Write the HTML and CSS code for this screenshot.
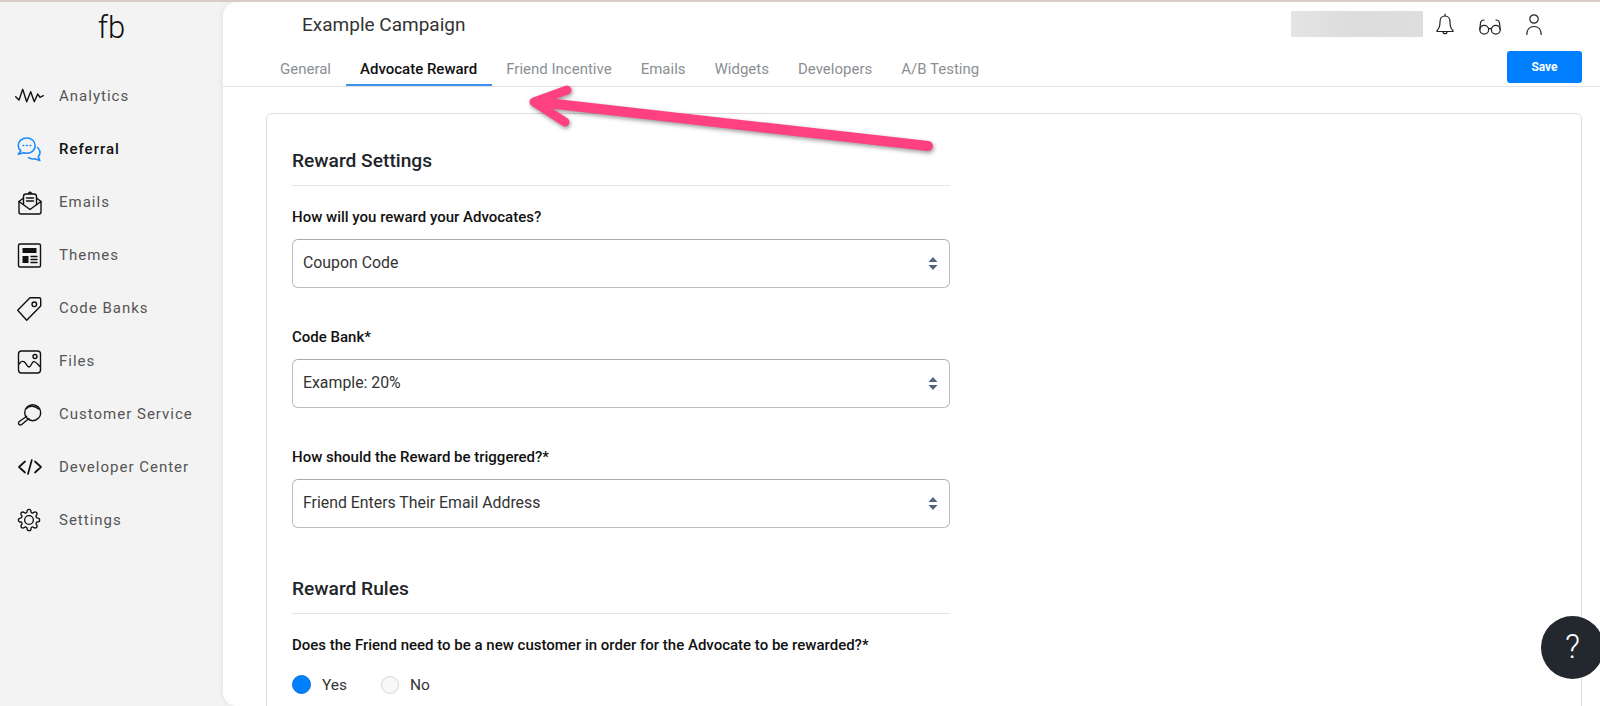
FILE: index.html
```html
<!DOCTYPE html>
<html lang="en">
<head>
    <meta charset="UTF-8">
    <meta name="viewport" content="width=device-width, initial-scale=1.0">
    <title>Example Campaign</title>
    <link rel="stylesheet" href="styles.css">
</head>
<body>
    <aside class="sidebar">
        <div class="logo">fb</div>
        <nav class="side-nav">
            <a class="side-item">
                <svg class="side-icon" viewBox="0 0 30 30"><path d="M1.700 15.700 5 19 8.700 8.300 12.700 20.700 16.700 10.700 20.300 20.700 23.700 13 26 16.300 29.300 14.700"/></svg>
                <span>Analytics</span>
            </a>
            <a class="side-item active">
                <svg class="side-icon" viewBox="0 0 30 30"><path d="M12.800 4C8 4 4.200 7.200 4.200 11.400c0 2.300 1 4 2.600 5.300L4.300 20.300l5.200-1.500c1 .3 2.200.5 3.300.5 4.800 0 8.400-3.300 8.400-7.600S17.600 4 12.800 4z"/><path d="M23.500 13.500c3 2.400 3.500 6.300.7 9l1.600 4-4.800-1.800c-2.400.6-4.800.2-6.500-1"/><path class="dots" d="M9 11.500h.8M12.500 11.500h.8M16 11.500h.8"/></svg>
                <span>Referral</span>
            </a>
            <a class="side-item">
                <svg class="side-icon" viewBox="0 0 30 30"><path d="M5 14.500V25a2 2 0 0 0 2 2h18a2 2 0 0 0 2-2V14.500L16 22.500z"/><path d="M5 14.500 9.500 11M27 14.500 22.500 11"/><path d="M9.500 17.500V9.500A2.500 2.500 0 0 1 12 7h8a2.500 2.500 0 0 1 2.500 2.500v8M13.500 7 16 5l2.500 2M12.500 11h7M12.500 14h7"/></svg>
                <span>Emails</span>
            </a>
            <a class="side-item">
                <svg class="side-icon" viewBox="0 0 30 30"><rect x="4.500" y="4" width="22" height="23" rx="1.500"/><rect class="solid" x="8.500" y="8" width="14" height="5"/><rect class="solid" x="8.500" y="16" width="6" height="7"/><path d="M17 16.500h6M17 19.500h6M17 22.500h6"/></svg>
                <span>Themes</span>
            </a>
            <a class="side-item">
                <svg class="side-icon" viewBox="0 0 30 30"><path d="M26.700 6.200a1.500 1.500 0 0 0-1.500-1.500H16L3.700 17.300l9 10L26.700 13z"/><circle cx="20.300" cy="11.300" r="2.300"/></svg>
                <span>Code Banks</span>
            </a>
            <a class="side-item">
                <svg class="side-icon" viewBox="0 0 30 30"><rect x="4.500" y="5" width="22" height="22" rx="3"/><circle cx="21" cy="10.500" r="2"/><path d="M5 18c2-3 3.500-3 5-2.300 2 1 3 5 5 5.300 2 .2 2.500-4.500 4.500-5.300 2-.7 4.500 3 7 5.300"/></svg>
                <span>Files</span>
            </a>
            <a class="side-item">
                <svg class="side-icon" viewBox="0 0 30 30"><circle cx="18.700" cy="13.700" r="8"/><path d="M12.500 9.500c2-3 9-3 12 .5"/><path d="M12.800 17.200 5 22.800a1.900 1.900 0 0 0 2.400 2.900l7.500-6.200"/></svg>
                <span>Customer Service</span>
            </a>
            <a class="side-item">
                <svg class="side-icon code" viewBox="0 0 30 30"><path d="M11 9.500 5 15l6 5.500M17.800 8 14 22M21 9.500l6 5.500-6 5.500"/></svg>
                <span>Developer Center</span>
            </a>
            <a class="side-item">
                <svg class="side-icon" viewBox="-3.500 -3.500 31 31"><circle cx="12" cy="12" r="4.500"/><path d="M19.400 15a1.650 1.650 0 0 0 .33 1.820l.06.06a2 2 0 0 1 0 2.830 2 2 0 0 1-2.830 0l-.06-.06a1.650 1.650 0 0 0-1.820-.33 1.650 1.650 0 0 0-1 1.510V21a2 2 0 0 1-2 2 2 2 0 0 1-2-2v-.09A1.650 1.650 0 0 0 9 19.400a1.650 1.650 0 0 0-1.820.33l-.06.06a2 2 0 0 1-2.830 0 2 2 0 0 1 0-2.830l.06-.06a1.650 1.650 0 0 0 .33-1.820 1.650 1.650 0 0 0-1.510-1H3a2 2 0 0 1-2-2 2 2 0 0 1 2-2h.09A1.650 1.650 0 0 0 4.600 9a1.650 1.650 0 0 0-.33-1.820l-.06-.06a2 2 0 0 1 0-2.830 2 2 0 0 1 2.830 0l.06.06a1.650 1.650 0 0 0 1.820.33H9a1.650 1.650 0 0 0 1-1.510V3a2 2 0 0 1 2-2 2 2 0 0 1 2 2v.09a1.650 1.650 0 0 0 1 1.510 1.650 1.650 0 0 0 1.820-.33l.06-.06a2 2 0 0 1 2.830 0 2 2 0 0 1 0 2.830l-.06.06a1.650 1.650 0 0 0-.33 1.820V9a1.650 1.650 0 0 0 1.510 1H21a2 2 0 0 1 2 2 2 2 0 0 1-2 2h-.09a1.650 1.650 0 0 0-1.510 1z"/></svg>
                <span>Settings</span>
            </a>
        </nav>
    </aside>

    <main class="main">
        <header class="topbar">
            <div class="campaign-title">Example Campaign</div>
            <div class="top-tools">
                <div class="blurred-name"></div>
                <svg class="tool-icon bell" viewBox="0 0 18 22"><path d="M9 3C5.500 3 4 5.800 4 9c0 4-.7 6.500-3 8.500v1h16v-1c-2.300-2-3-4.500-3-8.500 0-3.200-1.500-6-5-6z"/><path d="M9 3V1M7 18.700a2 2 0 0 0 4 0"/></svg>
                <svg class="tool-icon glasses" viewBox="0 0 22 16"><circle cx="5.200" cy="10.700" r="4.400"/><circle cx="16.800" cy="10.700" r="4.400"/><path d="M9.500 10c1-.8 2-.8 3 0M.8 10.500 1.500 4C1.800 1.800 3.200 1 5 1M21.200 10.500 20.500 4C20.200 1.800 18.800 1 17 1"/></svg>
                <svg class="tool-icon person" viewBox="0 0 16 21"><circle cx="8" cy="5" r="4.200"/><path d="M.7 21c0-5.500 3-8.500 7.300-8.500s7.300 3 7.300 8.500"/></svg>
            </div>
        </header>
        <div class="tabbar">
            <div class="tabs">
                <a class="tab">General</a>
                <a class="tab active">Advocate Reward</a>
                <a class="tab">Friend Incentive</a>
                <a class="tab">Emails</a>
                <a class="tab">Widgets</a>
                <a class="tab">Developers</a>
                <a class="tab">A/B Testing</a>
            </div>
            <button class="save-button">Save</button>
        </div>

        <div class="content">
            <section class="card">
                <div class="form-col">
                    <h2 class="section-title">Reward Settings</h2>

                    <label class="field-label">How will you reward your Advocates?</label>
                    <div class="select-box">
                        <span class="select-text">Coupon Code</span>
                        <svg class="sort-icon" viewBox="0 0 10 13"><path d="M5 0 9.500 5H.5zM5 13 .5 8h9z"/></svg>
                    </div>

                    <label class="field-label">Code Bank*</label>
                    <div class="select-box">
                        <span class="select-text">Example: 20%</span>
                        <svg class="sort-icon" viewBox="0 0 10 13"><path d="M5 0 9.500 5H.5zM5 13 .5 8h9z"/></svg>
                    </div>

                    <label class="field-label">How should the Reward be triggered?*</label>
                    <div class="select-box">
                        <span class="select-text">Friend Enters Their Email Address</span>
                        <svg class="sort-icon" viewBox="0 0 10 13"><path d="M5 0 9.500 5H.5zM5 13 .5 8h9z"/></svg>
                    </div>

                    <h2 class="section-title second">Reward Rules</h2>

                    <label class="field-label">Does the Friend need to be a new customer in order for the Advocate to be rewarded?*</label>
                    <div class="radio-row">
                        <span class="radio checked"></span>
                        <span class="radio-text">Yes</span>
                        <span class="radio"></span>
                        <span class="radio-text">No</span>
                    </div>
                </div>
            </section>
        </div>
    </main>

    <!-- annotation drawn over the screenshot -->
    <svg class="annotation" viewBox="0 0 420 80">
        <path class="shaft" d="M408 66 18 22"/>
        <path class="head" d="M47 10 14 22 45 42"/>
    </svg>

    <div class="help-button">?</div>
</body>
</html>
```

FILE: styles.css
```css
* {
    box-sizing: border-box;
}

html, body {
    height: 100%;
}

body {
    margin: 0;
    display: flex;
    overflow: hidden;
    border-top: 2px solid #d9cbc7;
    background-color: #f3f3f3;
    font-family: 'Roboto', 'Liberation Sans', sans-serif;
    color: #212529;
}

/* Sidebar */
.sidebar {
    width: 223px;
    flex-shrink: 0;
}

.logo {
    height: 67px;
    padding-top: 8px;
    text-align: center;
    font-size: 31px;
    font-weight: 300;
    line-height: 36px;
    color: #111;
}

.side-item {
    display: flex;
    align-items: center;
    gap: 15px;
    height: 53px;
    padding-left: 14px;
    font-size: 15px;
    letter-spacing: 1px;
    color: #555;
}

.side-item.active {
    color: #111;
    font-weight: 500;
}

.side-icon {
    width: 30px;
    height: 30px;
    flex-shrink: 0;
    fill: none;
    stroke: #111;
    stroke-width: 1.4;
    stroke-linejoin: round;
    stroke-linecap: round;
}

.side-item.active .side-icon {
    stroke: #1a8cff;
    stroke-width: 1.6;
}

.side-icon.code {
    stroke-width: 1.7;
}

.side-icon .solid {
    fill: #111;
    stroke: none;
}

.side-icon .dots {
    stroke-width: 1.5;
}

/* Main panel */
.main {
    flex: 1;
    min-width: 0;
    background-color: #fff;
    border-radius: 14px 0 0 14px;
    box-shadow: -2px 0 5px rgba(0, 0, 0, 0.05);
    overflow: hidden;
}

.topbar {
    display: flex;
    align-items: center;
    justify-content: space-between;
    height: 44px;
    padding-left: 79px;
    padding-right: 58px;
}

.campaign-title {
    font-size: 19px;
    color: #333;
}

.top-tools {
    display: flex;
    align-items: center;
}

.blurred-name {
    width: 132px;
    height: 26px;
    margin-right: 13px;
    background: linear-gradient(90deg, #e4e4e4, #dcdcdc 50%, #dedede);
}

.tool-icon {
    fill: none;
    stroke: #222;
    stroke-width: 1.2;
    stroke-linecap: round;
    stroke-linejoin: round;
}

.bell {
    width: 18px;
    height: 22px;
    margin-right: 25px;
}

.glasses {
    width: 22px;
    height: 16px;
    margin-top: 5px;
    margin-right: 25px;
}

.person {
    width: 16px;
    height: 21px;
}

.tabbar {
    display: flex;
    align-items: flex-start;
    justify-content: space-between;
    height: 41px;
    padding-left: 42.5px;
    padding-right: 18px;
    border-bottom: 1px solid #e2e2e2;
}

.tabs {
    display: flex;
}

.tab {
    height: 40px;
    padding: 13px 14.5px 0;
    font-size: 15px;
    line-height: 20px;
    color: #8b8f94;
    border-bottom: 2px solid transparent;
}

.tab.active {
    color: #111;
    font-weight: 500;
    border-bottom-color: #3d8ff0;
}

.save-button {
    width: 75px;
    height: 32px;
    margin-top: 5px;
    border: none;
    border-radius: 3px;
    background-color: #007fff;
    color: #fff;
    font-family: inherit;
    font-size: 12px;
    font-weight: 700;
}

.content {
    padding: 26px 18px 0 43px;
}

.card {
    height: 700px;
    padding: 36px 25px 0;
    border: 1px solid #ddd;
    border-radius: 6px;
}

.form-col {
    width: 658px;
}

.section-title {
    margin: 0 0 21px;
    padding-bottom: 13px;
    border-bottom: 1px solid #e4e4e4;
    font-size: 19.2px;
    font-weight: 500;
    line-height: 22px;
    color: #212529;
}

.section-title.second {
    margin-top: 50px;
}

.field-label {
    display: block;
    margin-bottom: 11px;
    font-size: 15px;
    font-weight: 500;
    line-height: 21px;
    color: #111;
}

.select-box {
    display: flex;
    align-items: center;
    justify-content: space-between;
    height: 49px;
    margin-bottom: 39px;
    padding: 0 11px 0 10px;
    border: 1px solid #bdbdbd;
    border-top-color: #a9a9a9;
    border-radius: 6px;
    font-size: 15.85px;
    color: #333;
}

.select-text {
    margin-bottom: 2px;
}

.sort-icon {
    width: 10px;
    height: 13px;
    fill: #56657f;
}

.radio-row {
    display: flex;
    align-items: center;
    margin-top: 19px;
}

.radio {
    width: 18px;
    height: 18px;
    border: 1px solid #d5d5d5;
    border-radius: 50%;
    background-color: #f8f8f8;
}

.radio.checked {
    width: 19px;
    height: 19px;
    border-color: #0a6fd8;
    background-color: #007fff;
}

.radio-text {
    margin-left: 11px;
    margin-right: 34px;
    font-size: 15.5px;
    color: #333;
}

/* Things lying over the page */
.annotation {
    position: absolute;
    left: 520px;
    top: 80px;
    width: 420px;
    height: 80px;
    fill: none;
    stroke: #ff4081;
    stroke-linecap: round;
    stroke-linejoin: round;
    filter: drop-shadow(1px 2px 2px rgba(0, 0, 0, 0.4));
}

.annotation .shaft {
    stroke-width: 10;
}

.annotation .head {
    stroke-width: 9;
}

.help-button {
    position: absolute;
    left: 1541px;
    top: 616px;
    width: 63px;
    height: 63px;
    border-radius: 50%;
    background-color: #23272e;
    color: #fff;
    font-size: 33px;
    font-weight: 300;
    line-height: 62px;
    text-align: center;
}
```
